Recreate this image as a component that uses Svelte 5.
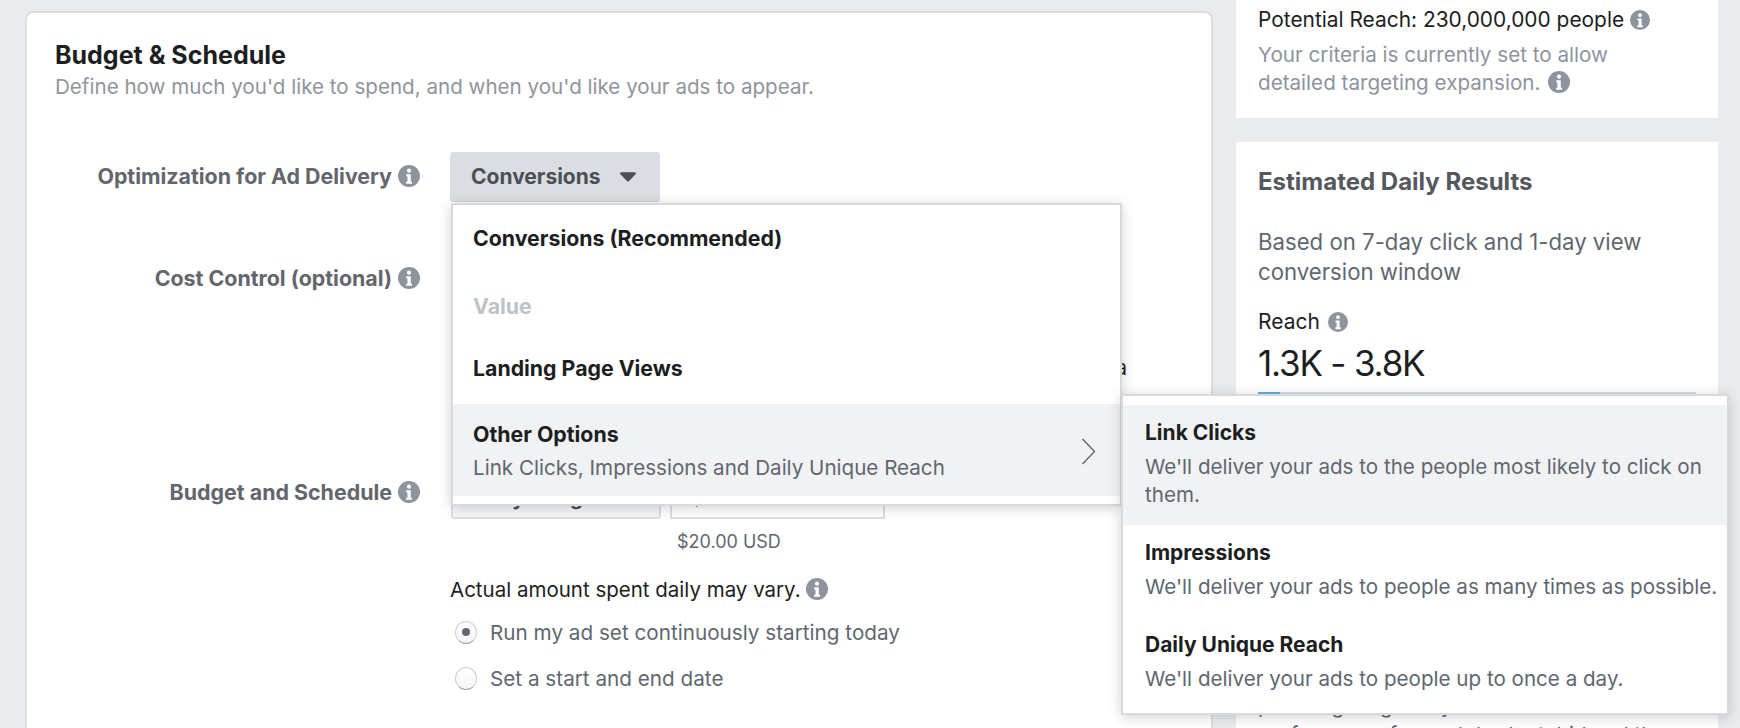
<script lang="ts">
  // Ads manager budget section with the optimisation dropdown opened.
  const otherGoals = [
    {
      title: "Link Clicks",
      text: "We'll deliver your ads to the people most likely to click on them.",
      active: true,
    },
    {
      title: "Impressions",
      text: "We'll deliver your ads to people as many times as possible.",
      active: false,
    },
    {
      title: "Daily Unique Reach",
      text: "We'll deliver your ads to people up to once a day.",
      active: false,
    },
  ];
</script>

{#snippet info(size = 22)}
  <svg class="info" width={size} height={size} viewBox="0 0 16 16" aria-hidden="true">
    <circle cx="8" cy="8" r="8" fill="#8d949e" />
    <circle cx="8" cy="4.1" r="1.5" fill="#fff" />
    <path d="M6 6.8h3.3v5.4h.9v1.5H5.9v-1.5h1V8.3H6z" fill="#fff" />
  </svg>
{/snippet}

<div class="page">
  <section class="card">
    <h2>Budget &amp; Schedule</h2>
    <p class="sub">Define how much you'd like to spend, and when you'd like your ads to appear.</p>

    <div class="row first">
      <div class="label">Optimization for Ad Delivery {@render info()}</div>
      <div class="control">
        <div class="drop">
          <button class="drop-btn">
            Conversions
            <svg width="16" height="10" viewBox="0 0 17 10" aria-hidden="true">
              <path d="M1.5 0h14c1.2 0 1.8 1.2 1 2.1L9.4 9.4c-.5.6-1.3.6-1.8 0L.5 2.1C-.3 1.2.3 0 1.5 0z" fill="#4b4f56" />
            </svg>
          </button>

          <div class="menu">
            <div class="item strong">Conversions (Recommended)</div>
            <div class="item strong disabled">Value</div>
            <div class="item strong landing">Landing Page Views</div>
            <div class="item other">
              <div class="other-title">Other Options</div>
              <div class="other-desc">Link Clicks, Impressions and Daily Unique Reach</div>
              <svg class="chev" width="15" height="27" viewBox="0 0 15 27" aria-hidden="true">
                <path d="M1.5 1l12 12.5-12 12.5" fill="none" stroke="#606770" stroke-width="1.4" />
              </svg>

              <div class="submenu">
                {#each otherGoals as goal}
                  <div class="goal" class:active={goal.active}>
                    <div class="goal-title">{goal.title}</div>
                    <div class="goal-text">{goal.text}</div>
                  </div>
                {/each}
              </div>
            </div>
          </div>
        </div>
      </div>
    </div>

    <div class="row cost">
      <div class="label">Cost Control (optional) {@render info()}</div>
      <div class="control">
        <div class="input narrow">$X.XX</div>
        <p class="cost-note">We'll aim to get the most conversions at the lowest cost using a</p>
      </div>
    </div>

    <div class="row budget">
      <div class="label">Budget and Schedule {@render info()}</div>
      <div class="control">
        <div class="budget-inputs">
          <div class="select">Daily Budget</div>
          <div class="input">$20.00</div>
        </div>
        <div class="usd">$20.00 USD</div>
        <div class="vary">Actual amount spent daily may vary. {@render info()}</div>
        <label class="radio-row on"><span class="radio"></span>Run my ad set continuously starting today</label>
        <label class="radio-row"><span class="radio"></span>Set a start and end date</label>
      </div>
    </div>
  </section>

  <aside class="side">
    <div class="panel top">
      <div class="reach-line">Potential Reach: 230,000,000 people {@render info(20)}</div>
      <p class="criteria">Your criteria is currently set to allow<br />detailed targeting expansion. {@render info()}</p>
    </div>
    <div class="panel results">
      <h3>Estimated Daily Results</h3>
      <p class="window">Based on 7-day click and 1-day view conversion window</p>
      <div class="reach-label">Reach {@render info(20)}</div>
      <div class="reach-value">1.3K - 3.8K</div>
      <div class="bar"><span></span></div>
      <p class="foot">past targeting and your ad set's performance for each budget, bid and the data used to</p>
    </div>
  </aside>
</div>

<style>
  :global(body) {
    margin: 0;
    background: #e9ebee;
    overflow: hidden;
  }
  .page {
    display: flex;
    align-items: flex-start;
    gap: 23px;
    height: 728px;
    overflow: hidden;
    padding-left: 25px;
    font-family: Inter, "Liberation Sans", sans-serif;
    color: #1c1e21;
    -webkit-font-smoothing: antialiased;
  }
  .card {
    flex: 0 0 1188px;
    box-sizing: border-box;
    height: 800px;
    margin-top: 11px;
    padding: 28px 30px 0 28px;
    background: #fff;
    border: 2px solid #dadde1;
    border-radius: 8px;
  }
  h2 {
    margin: 0;
    font-size: 25px;
    line-height: 28px;
    font-weight: 700;
  }
  .sub {
    margin: 4px 0 0;
    font-size: 20.6px;
    line-height: 28px;
    color: #90949c;
  }
  .row {
    display: flex;
    gap: 30px;
  }
  .row.first {
    margin-top: 51px;
  }
  .row.cost {
    margin-top: 62px;
  }
  .row.budget {
    margin-top: 87px;
  }
  .label {
    flex: 0 0 365px;
    display: flex;
    justify-content: flex-end;
    align-items: center;
    gap: 6px;
    height: 28px;
    font-size: 21.4px;
    font-weight: 700;
    color: #63666c;
    white-space: nowrap;
  }
  .first .label {
    margin-top: 10px;
  }
  .budget .label {
    margin-top: 9px;
  }
  .control {
    flex: 1;
    min-width: 0;
  }
  .info {
    flex: none;
    vertical-align: -3px;
  }
  .drop {
    position: relative;
    width: 210px;
  }
  .drop-btn {
    display: flex;
    align-items: center;
    gap: 19px;
    box-sizing: border-box;
    width: 210px;
    height: 50px;
    padding: 0 0 0 21px;
    border: 0;
    border-bottom: 1px solid #d0d3d8;
    border-radius: 3px;
    background: #dadde1;
    font: 700 21px Inter, "Liberation Sans", sans-serif;
    color: #4b4f56;
  }
  .menu {
    position: absolute;
    top: 51px;
    left: 1px;
    z-index: 5;
    box-sizing: border-box;
    width: 671px;
    height: 303px;
    padding: 7px 0;
    background: #fff;
    border: 2px solid #d6d9dd;
    box-shadow: 0 2px 12px rgba(0, 0, 0, 0.18);
  }
  .item {
    padding: 14px 22px 14px 20px;
    font-size: 21.3px;
    line-height: 24px;
  }
  .strong {
    font-weight: 700;
  }
  .disabled {
    margin-top: 16px;
    color: #bec3c9;
  }
  .landing {
    margin: 10px 0 10px;
  }
  .other {
    position: relative;
    height: 92px;
    box-sizing: border-box;
    padding-top: 18px;
    background: #f1f2f4;
  }
  .other-title {
    font-weight: 700;
  }
  .other-desc {
    margin-top: 10px;
    font-size: 20.6px;
    color: #606770;
  }
  .chev {
    position: absolute;
    top: 34px;
    right: 24px;
  }
  .submenu {
    position: absolute;
    top: -10px;
    left: 668px;
    z-index: 6;
    box-sizing: border-box;
    width: 608px;
    height: 321px;
    padding-top: 9px;
    background: #fff;
    border: 2px solid #d6d9dd;
    box-shadow: 0 2px 12px rgba(0, 0, 0, 0.18);
  }
  .goal {
    padding: 16px 8px 16px 22px;
  }
  .goal.active {
    background: #f1f2f4;
  }
  .goal-title {
    font-size: 21px;
    line-height: 24px;
    font-weight: 700;
  }
  .goal-text {
    margin-top: 8px;
    font-size: 20.6px;
    line-height: 28px;
    color: #606770;
    white-space: normal;
  }
  .input {
    box-sizing: border-box;
    width: 215px;
    height: 50px;
    padding: 0 18px;
    border: 2px solid #dddfe2;
    font-size: 20.6px;
    line-height: 53px;
    color: #606770;
  }
  .narrow {
    width: 208px;
    margin-left: 2px;
  }
  .cost-note {
    width: 677px;
    margin: 40px 0 0;
    font-size: 20.6px;
    line-height: 28px;
    white-space: nowrap;
    text-align: right;
  }
  .budget-inputs {
    display: flex;
    gap: 9px;
    margin-left: 1px;
  }
  .select {
    box-sizing: border-box;
    width: 210px;
    height: 50px;
    padding-left: 20px;
    border: 2px solid #dddfe2;
    border-radius: 3px;
    background: #f5f6f7;
    font-size: 21px;
    font-weight: 700;
    line-height: 53px;
    color: #4b4f56;
  }
  .usd {
    margin: 9px 0 0 227px;
    font-size: 18px;
    line-height: 28px;
    color: #606770;
  }
  .vary {
    margin-top: 20px;
    font-size: 20.5px;
    line-height: 28px;
  }
  .radio-row {
    display: flex;
    align-items: center;
    gap: 13px;
    height: 28px;
    margin-top: 14px;
    padding-left: 5px;
    font-size: 20.7px;
    color: #606770;
  }
  .radio-row + .radio-row {
    margin-top: 18px;
  }
  .radio {
    position: relative;
    box-sizing: border-box;
    width: 22px;
    height: 23px;
    border: 1px solid #ccd0d5;
    border-bottom-color: #a8adb5;
    border-radius: 50%;
    background: linear-gradient(#fff, #f5f6f7);
  }
  .on .radio::after {
    content: "";
    position: absolute;
    top: 6px;
    left: 6px;
    width: 8px;
    height: 8px;
    border-radius: 50%;
    background: #606770;
  }
  .side {
    flex: 0 0 482px;
    display: flex;
    flex-direction: column;
    gap: 24px;
  }
  .panel {
    box-sizing: border-box;
    padding: 0 22px;
    background: #fff;
  }
  .top {
    height: 118px;
    padding-top: 6px;
  }
  .reach-line {
    font-size: 20.9px;
    line-height: 28px;
  }
  .criteria {
    margin: 7px 0 0;
    font-size: 20.65px;
    line-height: 28px;
    color: #8d949e;
  }
  .criteria .info {
    margin-left: 2px;
  }
  .results {
    height: 600px;
    padding-top: 25px;
  }
  h3 {
    margin: 0;
    font-size: 24px;
    line-height: 30px;
    font-weight: 700;
    color: #55585d;
  }
  .window {
    margin: 30px 0 0;
    font-size: 22.2px;
    line-height: 30px;
    color: #606770;
  }
  .reach-label {
    margin-top: 21px;
    font-size: 21px;
    line-height: 28px;
  }
  .reach-label .info {
    margin-left: 2px;
  }
  .reach-value {
    margin-top: 5px;
    font-size: 35px;
    line-height: 44px;
    letter-spacing: -1.2px;
  }
  .bar {
    height: 4px;
    margin-top: 7px;
    background: #dadde1;
  }
  .bar span {
    display: block;
    width: 22px;
    height: 4px;
    background: #5bb5d9;
  }
  .foot {
    margin: 295px 0 0;
    font-size: 20.6px;
    line-height: 29px;
    color: #606770;
  }
</style>
